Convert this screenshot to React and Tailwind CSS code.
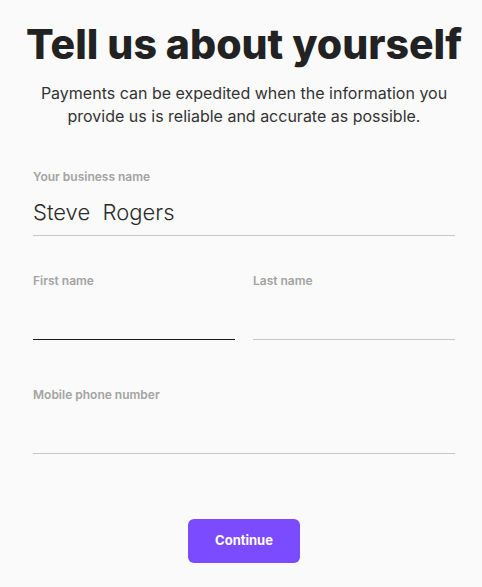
import React, { useState } from "react";

const Field = ({ label, value, onChange, active }) => (
  <div className="flex flex-col">
    <label className="text-[12px] font-semibold text-[#a3a3a3] leading-4">{label}</label>
    <input
      type="text"
      value={value}
      onChange={(e) => onChange(e.target.value)}
      className={
        "mt-[4px] h-[47px] bg-transparent text-[22px] font-light text-[#2a2a2a] outline-none border-b " +
        (active ? "border-[#1a1a1a]" : "border-[#c6c6c6]")
      }
    />
  </div>
);

const App = () => {
  const [business, setBusiness] = useState("Steve  Rogers");
  const [first, setFirst] = useState("");
  const [last, setLast] = useState("");
  const [phone, setPhone] = useState("");

  return (
    <div
      className="min-h-[587px] w-[482px] bg-[#fafafa] pl-[33px] pr-[27px] pt-[19px]"
      style={{ fontFamily: "Inter, 'Noto Sans', sans-serif" }}
    >
      <h1 className="-mx-[20px] text-center text-[41px] font-extrabold leading-[50px] text-[#222]">
        Tell us about yourself
      </h1>
      <p className="-mx-[10px] mt-[13px] text-center text-[16px] leading-[23px] text-[#333]">
        Payments can be expedited when the information you provide us is reliable and accurate as possible.
      </p>

      <div className="mt-[41px]">
        <Field label="Your business name" value={business} onChange={setBusiness} />
      </div>

      <div className="mt-[37px] grid grid-cols-2 gap-[18px]">
        <Field label="First name" value={first} onChange={setFirst} active />
        <Field label="Last name" value={last} onChange={setLast} />
      </div>

      <div className="mt-[47px]">
        <Field label="Mobile phone number" value={phone} onChange={setPhone} />
      </div>

      <div className="mt-[65px] flex justify-center">
        <button className="h-[44px] w-[112px] rounded-[6px] bg-[#7b4cff] text-[13px] font-bold text-white">
          Continue
        </button>
      </div>
    </div>
  );
};

export default App;
